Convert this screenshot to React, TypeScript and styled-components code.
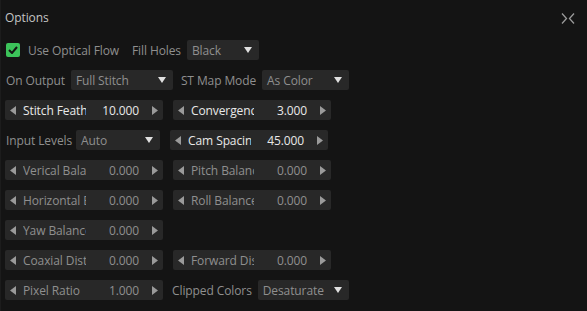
import { FunctionComponent } from 'react';
import styled, { createGlobalStyle } from 'styled-components';

const GlobalStyle = createGlobalStyle`
	html, body {
		margin: 0;
		padding: 0;
		background: #141414;
	}
	body {
		font-family: 'Open Sans', 'Liberation Sans', sans-serif;
		font-size: 12px;
		letter-spacing: -0.1px;
	}
`;

const Panel = styled.div`
	width: 587px;
	height: 311px;
	box-sizing: border-box;
	background: #141414;
	border-left: 1px solid #1c1c1c;
	padding: 0 0 0 4px;
	display: flex;
	flex-direction: column;
`;

const Header = styled.div`
	display: flex;
	align-items: center;
	justify-content: space-between;
	height: 36px;
	padding-right: 12px;
`;

const Title = styled.span`
	color: #c4c4c4;
	font-size: 12px;
	margin-top: -1px;
`;

const Rows = styled.div`
	display: flex;
	flex-direction: column;
	gap: 10px;
	margin-top: 4px;
`;

const Row = styled.div`
	display: flex;
	align-items: center;
	height: 20px;
`;

const Label = styled.span<{ $gap?: number; $after?: number }>`
	color: #8f8f8f;
	white-space: nowrap;
	margin-left: ${(p) => p.$gap ?? 0}px;
	margin-right: ${(p) => p.$after ?? 6}px;
`;

const Check = styled.span`
	width: 14px;
	height: 14px;
	border-radius: 2px;
	background: #3cc35a;
	display: flex;
	align-items: center;
	justify-content: center;
	margin: 0 8px 0 1px;
`;

const Select = styled.div<{ $w: number }>`
	width: ${(p) => p.$w}px;
	height: 20px;
	box-sizing: border-box;
	background: #282828;
	border-radius: 2px;
	display: flex;
	align-items: center;
	justify-content: space-between;
	padding: 0 7px 0 5px;
	color: #8f8f8f;
	flex-shrink: 0;
`;

const Slider = styled.div<{ $gap?: number }>`
	width: 158px;
	height: 20px;
	box-sizing: border-box;
	background: #282828;
	border-radius: 2px;
	display: flex;
	align-items: center;
	padding: 0 5px;
	margin-left: ${(p) => p.$gap ?? 0}px;
	flex-shrink: 0;
`;

const SliderLabel = styled.span<{ $on?: boolean }>`
	width: 63px;
	flex-shrink: 0;
	margin-left: 7px;
	overflow: hidden;
	white-space: nowrap;
	color: ${(p) => (p.$on ? '#e8e8e8' : '#8f8f8f')};
`;

const SliderValue = styled.span<{ $on?: boolean }>`
	flex: 1;
	text-align: right;
	margin-right: 13px;
	white-space: nowrap;
	color: ${(p) => (p.$on ? '#e8e8e8' : '#8f8f8f')};
`;

const Arrow: FunctionComponent<{ dir: 'l' | 'r' | 'd' }> = ({ dir }) => {
	if (dir === 'd') {
		return (
			<svg width="8" height="6" viewBox="0 0 8 6">
				<path d="M0 0 L8 0 L4 6 Z" fill="#e0e0e0" />
			</svg>
		);
	}
	return (
		<svg width="6" height="9" viewBox="0 0 6 9">
			<path d={dir === 'l' ? 'M6 0 L6 9 L0 4.5 Z' : 'M0 0 L0 9 L6 4.5 Z'} fill="#9a9a9a" />
		</svg>
	);
};

const Dropdown: FunctionComponent<{ w: number; value: string }> = ({ w, value }) => (
	<Select $w={w}>
		<span>{value}</span>
		<Arrow dir="d" />
	</Select>
);

const Spin: FunctionComponent<{ label: string; value: string; on?: boolean; gap?: number }> = ({ label, value, on, gap }) => (
	<Slider $gap={gap}>
		<Arrow dir="l" />
		<SliderLabel $on={on}>{label}</SliderLabel>
		<SliderValue $on={on}>{value}</SliderValue>
		<Arrow dir="r" />
	</Slider>
);

const App: FunctionComponent = () => {
	return (
		<Panel>
			<GlobalStyle />
			<Header>
				<Title>Options</Title>
				<svg width="14" height="11" viewBox="0 0 14 11">
					<path d="M1 0.5 L5.5 5.5 L1 10.5 M13 0.5 L8.5 5.5 L13 10.5" stroke="#9a9a9a" strokeWidth="1.3" fill="none" />
				</svg>
			</Header>
			<Rows>
				<Row>
					<Check>
						<svg width="10" height="8" viewBox="0 0 10 8">
							<path d="M1 4 L4 7 L9 1" stroke="#141414" strokeWidth="2" fill="none" />
						</svg>
					</Check>
					<Label>Use Optical Flow</Label>
					<Label $gap={7}>Fill Holes</Label>
					<Dropdown w={72} value="Black" />
				</Row>
				<Row>
					<Label $gap={1}>On Output</Label>
					<Dropdown w={102} value="Full Stitch" />
					<Label $gap={8}>ST Map Mode</Label>
					<Dropdown w={87} value="As Color" />
				</Row>
				<Row>
					<Spin label="Stitch Feather" value="10.000" on />
					<Spin label="Convergence" value="3.000" on gap={10} />
				</Row>
				<Row>
					<Label $gap={1} $after={4}>Input Levels</Label>
					<Dropdown w={84} value="Auto" />
					<Spin label="Cam Spacing" value="45.000" on gap={10} />
				</Row>
				<Row>
					<Spin label="Verical Balance" value="0.000" />
					<Spin label="Pitch Balance" value="0.000" gap={10} />
				</Row>
				<Row>
					<Spin label="Horizontal Balance" value="0.000" />
					<Spin label="Roll Balance" value="0.000" gap={10} />
				</Row>
				<Row>
					<Spin label="Yaw Balance" value="0.000" />
				</Row>
				<Row>
					<Spin label="Coaxial Distance" value="0.000" />
					<Spin label="Forward Distance" value="0.000" gap={10} />
				</Row>
				<Row>
					<Spin label="Pixel Ratio" value="1.000" />
					<Label $gap={9}>Clipped Colors</Label>
					<Dropdown w={91} value="Desaturate" />
				</Row>
			</Rows>
		</Panel>
	);
};

export default App;
